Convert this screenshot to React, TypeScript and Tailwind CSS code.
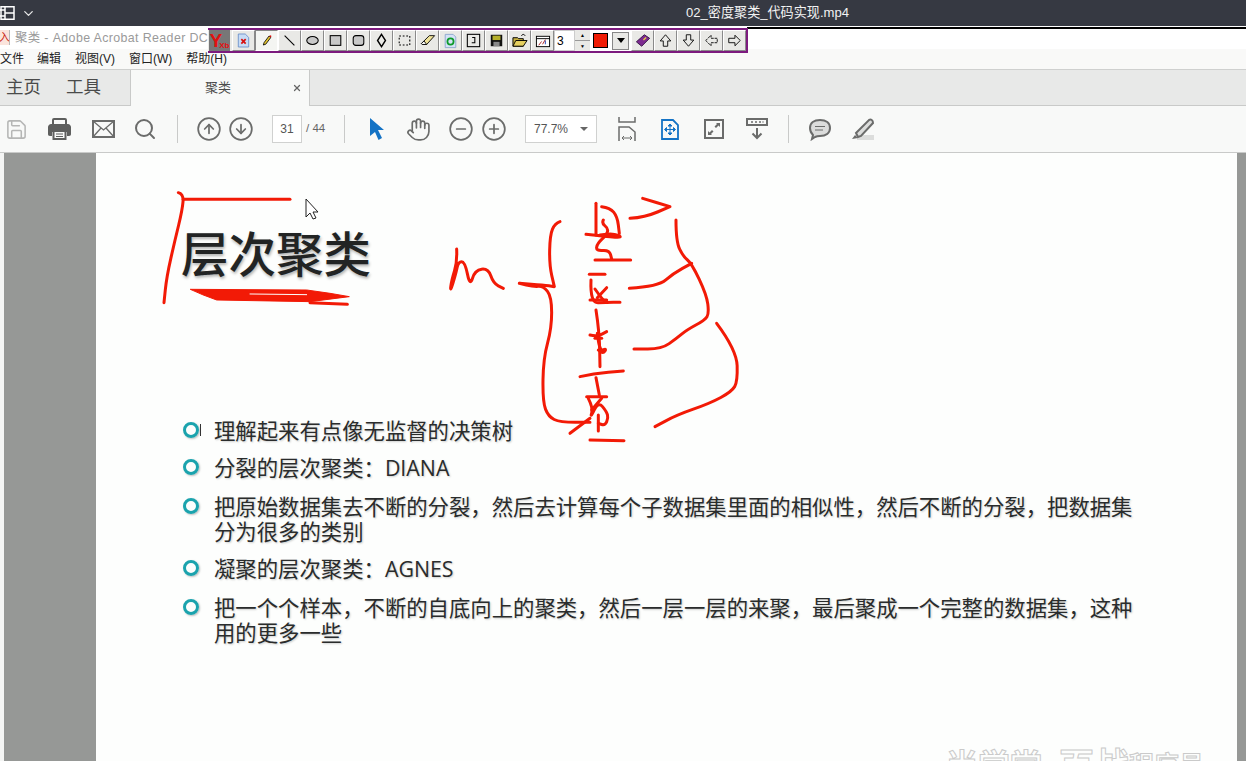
import React from 'react';
import { Save, Search, CircleArrowUp, CircleArrowDown, Hand, CircleMinus, CirclePlus, X, ChevronDown } from 'lucide-react';

const FONT = 'font-["Liberation_Sans","Noto_Sans_CJK_SC",sans-serif]';

const Slot: React.FC<{ className?: string; children: React.ReactNode }> = ({ className, children }) => (
  <div className={`flex items-center justify-center w-[32px] h-[32px] shrink-0 text-[#6b6c6b] ${className ?? ''}`}>{children}</div>
);

const Divider: React.FC<{ className?: string }> = ({ className }) => (
  <div className={`w-px h-[28px] bg-[#c9cac9] shrink-0 ${className ?? ''}`} />
);

const Tool: React.FC<{ active?: boolean; children?: React.ReactNode }> = ({ active, children }) => (
  <div className={`flex items-center justify-center w-[23px] h-[21px] shrink-0 border ${active ? 'bg-[#f4f5f2] border-t-[#888] border-l-[#888] border-r-white border-b-white' : 'bg-[#e9e9e6] border-t-white border-l-white border-r-[#8a8a8a] border-b-[#8a8a8a]'}`}>
    {children}
  </div>
);

const Ico: React.FC<{ children: React.ReactNode }> = ({ children }) => (
  <svg width="15" height="15" viewBox="0 0 17 17" fill="none" stroke="#000" strokeWidth="1.200">{children}</svg>
);

const PurpleToolbar = () => (
  <div className="absolute left-[208px] top-[28px] w-[540px] h-[25px] flex items-center bg-[#e9e9e6] border-y-2 border-r-2 border-[#7c1a7e]">
    <div className="ml-px w-[21px] h-[21px] bg-[#777] flex items-end justify-center shrink-0 overflow-hidden">
      <span className={`text-[#e21010] text-[19px] leading-[21px] font-bold ${FONT}`}>Y</span>
      <span className={`-ml-[3px] text-[#e21010] text-[8px] leading-[11px] font-bold ${FONT}`}>Xb</span>
    </div>
    <div className="w-[2px] shrink-0" />
    <Tool>
      <svg width="13" height="15" viewBox="0 0 15 17"><path d="M1.500 1h8l4 4v11h-12z" fill="#c8dcf6" stroke="#6a8fc8" /><path d="M5 7l5 5M10 7l-5 5" stroke="#d81010" strokeWidth="2" /></svg>
    </Tool>
    <Tool active>
      <svg width="14" height="15" viewBox="0 0 17 17"><path d="M11 3l2 2-6 8-3 1 1-3z" fill="#e8c830" stroke="#000" /><path d="M11 3l2 2 1-2-1-1z" fill="#d81010" /></svg>
    </Tool>
    <Tool><Ico><path d="M3 3l11 11" /></Ico></Tool>
    <Tool><Ico><ellipse cx="8.500" cy="8.500" rx="6.500" ry="4.500" fill="#c8c8c8" /></Ico></Tool>
    <Tool><Ico><rect x="2.500" y="3" width="12" height="11" fill="#c8c8c8" /></Ico></Tool>
    <Tool><Ico><rect x="2.500" y="3" width="12" height="11" rx="3" fill="#c8c8c8" /></Ico></Tool>
    <Tool><Ico><path d="M8.500 1.500l4.500 7-4.500 7-4.500-7z" fill="#e9e9e6" strokeWidth="1.600" /></Ico></Tool>
    <Tool><Ico><rect x="2.500" y="3.500" width="12" height="10" strokeDasharray="2 2" /></Ico></Tool>
    <Tool>
      <svg width="16" height="15" viewBox="0 0 17 17"><path d="M1 12l9-9h6l-9 10H2z" fill="#efe39a" stroke="#000" /><path d="M1 12l3-3 3 4H2z" fill="#fff" stroke="#000" /></svg>
    </Tool>
    <Tool>
      <svg width="15" height="16" viewBox="0 0 17 17"><path d="M2.500 1h9l3 3v12h-12z" fill="#d4e2f6" stroke="#8aa4cc" /><circle cx="8.500" cy="9" r="3.500" fill="none" stroke="#0c9a2a" strokeWidth="2" /></svg>
    </Tool>
    <Tool><Ico><rect x="1.500" y="1.500" width="14" height="14" /><path d="M7 5h3v6H6.500" /></Ico></Tool>
    <Tool>
      <svg width="15" height="15" viewBox="0 0 17 17"><rect x="2" y="2" width="13" height="13" fill="#111" /><rect x="4" y="3" width="9" height="5" fill="#b5b02a" /><rect x="5" y="10" width="7" height="5" fill="#888" /></svg>
    </Tool>
    <Tool>
      <svg width="16" height="16" viewBox="0 0 17 17"><path d="M1 14V5h5l1 1h5v8z" fill="#c6b040" stroke="#000" /><path d="M1 14l3-6h12l-4 6z" fill="#e6d060" stroke="#000" /><path d="M10 3c1-2 3-2 4 0" stroke="#000" fill="none" /></svg>
    </Tool>
    <Tool>
      <svg width="16" height="16" viewBox="0 0 17 17"><rect x="1.500" y="3.500" width="14" height="11" fill="#fff" stroke="#000" /><path d="M1.500 6h14" stroke="#000" /><path d="M4 13l3-4M8 12l3-5" stroke="#b02020" /><path d="M11 12V8" stroke="#2040b0" /></svg>
    </Tool>
    <div className="w-[21px] h-[21px] bg-white border border-[#ccc] shrink-0 flex items-center pl-[2px]">
      <span className={`text-[12px] leading-none text-black ${FONT}`}>3</span>
    </div>
    <div className="w-[15px] h-[21px] flex flex-col shrink-0">
      <div className="flex-1 flex items-center justify-center bg-[#e9e9e6] border-b border-[#999] text-[5px] leading-none">▲</div>
      <div className="flex-1 flex items-center justify-center bg-[#e9e9e6] text-[5px] leading-none">▼</div>
    </div>
    <div className="w-[41px] h-[21px] bg-white shrink-0 flex items-center pl-[3px] gap-[4px]">
      <div className="w-[15px] h-[15px] bg-[#f01c06] border border-black" />
      <div className="w-[17px] h-[18px] bg-[#e9e9e6] border border-[#888] flex items-center justify-center">
        <div className="w-0 h-0 border-x-[4px] border-x-transparent border-t-[5px] border-t-black" />
      </div>
    </div>
    <Tool>
      <svg width="16" height="15" viewBox="0 0 17 17"><path d="M1 10l9-8 6 4-9 9z" fill="#7c2a90" stroke="#301040" /><path d="M9 8l3-3" stroke="#e8d040" strokeWidth="1.500" /></svg>
    </Tool>
    <Tool><Ico><path d="M8.500 2l6 7h-3.500v6H6V9H2.500z" strokeWidth="1" /></Ico></Tool>
    <Tool><Ico><path d="M8.500 15l6-7h-3.500V2H6v6H2.500z" strokeWidth="1" /></Ico></Tool>
    <Tool><Ico><path d="M2 8.500l6-6v3.500h7V11H8v3.500z" strokeWidth="1" strokeDasharray="3 1" /></Ico></Tool>
    <Tool><Ico><path d="M15 8.500l-6-6v3.500H2V11h7v3.500z" strokeWidth="1" /></Ico></Tool>
  </div>
);

// turns hand-picked points into a soft pen stroke
const pen = (pts: number[][]) => {
  let d = `M${pts[0][0]} ${pts[0][1]}`;
  for (let i = 1; i < pts.length - 1; i++) {
    const mx = (pts[i][0] + pts[i + 1][0]) / 2;
    const my = (pts[i][1] + pts[i + 1][1]) / 2;
    d += `Q${pts[i][0]} ${pts[i][1]} ${mx} ${my}`;
  }
  const last = pts[pts.length - 1];
  return `${d}L${last[0]} ${last[1]}`;
};

const titleStrokes: number[][][] = [
  [[85, 38], [101, 42], [97, 90], [75, 180], [50, 290], [42, 368]],
  [[100, 58], [420, 58]],
  [[920, 207], [922, 245], [905, 300], [900, 338], [918, 280], [925, 245], [945, 245], [960, 320], [975, 270], [1015, 265], [1030, 310], [1060, 325]],
  [[480, 368], [592, 373]],
];

const treeStrokes: number[][][] = [
  [[258, 55], [258, 150]],
  [[275, 65], [300, 68], [322, 95], [328, 145]],
  [[280, 105], [275, 115], [295, 130], [290, 150], [262, 175], [258, 198], [298, 195], [305, 222]],
  [[228, 148], [290, 155], [340, 158], [310, 145], [270, 150]],
  [[255, 225], [362, 225]],
  [[238, 268], [285, 268]],
  [[243, 285], [240, 355], [290, 352], [330, 352]],
  [[255, 312], [278, 345], [292, 352]],
  [[290, 308], [262, 338]],
  [[240, 345], [290, 345]],
  [[258, 375], [268, 440], [270, 545]],
  [[240, 450], [262, 455], [290, 440]],
  [[262, 445], [268, 500], [290, 490], [280, 505], [265, 495]],
  [[255, 460], [275, 460]],
  [[210, 575], [250, 565], [340, 558]],
  [[258, 578], [268, 630]],
  [[230, 635], [290, 635]],
  [[235, 640], [250, 670], [240, 700], [265, 650], [290, 680], [295, 700], [285, 722], [265, 715]],
  [[275, 640], [245, 675]],
  [[265, 690], [265, 738]],
  [[180, 745], [240, 700]],
  [[240, 765], [342, 767]],
  [[150, 110], [135, 115], [120, 150], [118, 240], [133, 305], [133, 305], [100, 300], [28, 295], [28, 295], [70, 305], [100, 303], [125, 335], [125, 430], [100, 520], [98, 650], [115, 695], [150, 712], [240, 712]],
  [[360, 100], [405, 97], [480, 65], [480, 65], [398, 40]],
  [[498, 105], [498, 170], [520, 215], [545, 235], [590, 330], [597, 385], [585, 405], [530, 435], [500, 460], [455, 492], [372, 492]],
  [[358, 310], [445, 305], [490, 265], [545, 235]],
  [[620, 415], [680, 495], [683, 590], [665, 620], [600, 655], [500, 690], [435, 725]],
];

const Ink = () => (
  <svg className="absolute inset-0 pointer-events-none" width="1246" height="761" viewBox="0 0 1246 761" fill="none" stroke="#f21a06" strokeLinecap="round" strokeLinejoin="round">
    <g transform="translate(150 180) scale(0.3333)" strokeWidth="9">
      {titleStrokes.map((s, i) => <path key={i} d={pen(s)} />)}
      <path d="M122 328L470 330L540 340L598 350L480 365L200 360L160 345Z" fill="#f21a06" strokeWidth="3" />
      <path d="M300 342L470 344" stroke="#fdfefd" strokeWidth="3" />
    </g>
    <g transform="translate(510 185) scale(0.3333)" strokeWidth="9">
      {treeStrokes.map((s, i) => <path key={i} d={pen(s)} />)}
    </g>
    <path d="M306 199V217L310 213L313 219L316 218L313 212H318Z" fill="#fff" stroke="#222" strokeWidth="1" strokeLinecap="butt" />
  </svg>
);

const Bullet: React.FC<{ className?: string; text: string; caret?: boolean }> = ({ className, text, caret }) => (
  <div className={`relative flex items-start ${className ?? ''}`}>
    <div className="w-[16px] h-[16px] mt-[4px] rounded-full border-[3.500px] border-[#1ba3ad] shrink-0 [box-shadow:1px_1px_2px_rgba(0,0,0,0.25)]" />
    {caret ? <div className="absolute left-[17px] top-[6px] w-px h-[12px] bg-[#333]" /> : null}
    <p className={`ml-[15px] w-[925px] text-[21.37px] leading-[25px] text-[#2a2c2c] [text-shadow:1px_1px_2px_rgba(0,0,0,0.2)] font-["Open_Sans","Noto_Sans_CJK_SC",sans-serif]`}>{text}</p>
  </div>
);

const App: React.FC = () => {
  return (
    <div className={`relative w-full h-screen overflow-hidden flex flex-col bg-white ${FONT}`}>
      {/* player title bar */}
      <div className="h-[26px] shrink-0 bg-[#363942] flex items-center relative">
        <svg width="15" height="14" viewBox="0 0 15 14" fill="none" stroke="#fff" strokeWidth="1.500" className="shrink-0">
          <path d="M1 .8h13v12.400H1zM5 .8v12.400M5 7h9M0 4h5M0 10h5" />
        </svg>
        <ChevronDown size={15} color="#e8e8e8" className="ml-[6px]" />
        <span className="ml-[650px] text-[13.1px] text-[#f2f2f2] whitespace-nowrap">02_密度聚类_代码实现.mp4</span>
      </div>

      {/* acrobat title */}
      <div className="h-[23px] shrink-0 bg-white flex items-center relative">
        <div className="w-[10px] h-[15px] bg-[#fbe4dc] border-r border-[#b8b8b8] flex items-center justify-center shrink-0 overflow-hidden">
          <span className="text-[#c8200c] text-[11px] leading-none">入</span>
        </div>
        <span className="ml-[5px] mt-[1px] text-[12.4px] text-[#9a9a9a] tracking-[0.38px] whitespace-nowrap">聚类 - Adobe Acrobat Reader DC</span>
        <div className="absolute left-[747px] right-0 top-[1px] h-[2px] bg-black" />
      </div>

      {/* menu */}
      <div className="h-[21px] shrink-0 bg-[#f9f9f8] border-b border-[#cfd0cf] flex items-center text-[12px] text-[#222]">
        <span>文件</span>
        <span className="ml-[13px]">编辑</span>
        <span className="ml-[14px]">视图(V)</span>
        <span className="ml-[14px]">窗口(W)</span>
        <span className="ml-[14px]">帮助(H)</span>
      </div>

      {/* tabs */}
      <div className="h-[36px] shrink-0 bg-[#e8e9e8] border-b border-[#c9cac9] flex items-stretch">
        <div className="w-[130px] flex items-center pl-[6px] gap-[25px] text-[17.500px] text-[#4a4b4a]">
          <span>主页</span>
          <span>工具</span>
        </div>
        <div className="w-[180px] bg-[#f8f9f8] border-x border-[#c9cac9] -mb-px flex items-center relative">
          <span className="ml-[74px] text-[13px] text-[#4a4b4a]">聚类</span>
          <X size={10} strokeWidth={3} color="#666" className="absolute left-[161px] top-[13px]" />
        </div>
      </div>

      {/* main toolbar */}
      <div className="h-[47px] shrink-0 bg-[#f8f9f8] border-b border-[#c9cac9] flex items-center">
        <Slot className="ml-0 text-[#b5b6b5]"><Save size={23} strokeWidth={1.600} /></Slot>
        <Slot className="ml-[11px]">
          <svg width="23" height="22" viewBox="0 0 23 22">
            <path d="M5 7V2c0-.6.4-1 1-1h11c.6 0 1 .4 1 1v5z" fill="none" stroke="#5e5f5e" strokeWidth="2" />
            <path d="M3 6h17c1.500 0 3 1.500 3 3v7c0 1-.5 2-2 2h-2v-4H4v4H2c-1.500 0-2-1-2-2V9c0-1.500 1.500-3 3-3z" fill="#5e5f5e" />
            <path d="M5.500 13h12v8h-12z" fill="#f8f9f8" stroke="#5e5f5e" strokeWidth="2" />
            <path d="M8 16h7M8 18.500h7" stroke="#5e5f5e" />
          </svg>
        </Slot>
        <Slot className="ml-[12px]">
          <svg width="23" height="18" viewBox="0 0 23 18" fill="none" stroke="#6b6c6b">
            <rect x="1" y="1" width="21" height="16" strokeWidth="2" />
            <path d="M1 1l10.500 9L22 1M1 17l8-9M22 17l-8-9" strokeWidth="1.300" />
          </svg>
        </Slot>
        <Slot className="ml-[10px]"><Search size={24} strokeWidth={2} /></Slot>
        <Divider className="ml-[16px]" />
        <Slot className="ml-[15px]"><CircleArrowUp size={26} strokeWidth={1.600} /></Slot>
        <Slot className="ml-0"><CircleArrowDown size={26} strokeWidth={1.600} /></Slot>
        <div className="ml-[15px] w-[30px] h-[28px] bg-white border border-[#d0d1d0] flex items-center justify-center text-[12px] text-[#555]">31</div>
        <span className="ml-[4px] text-[11.500px] text-[#666] whitespace-nowrap w-[23px]">/ 44</span>
        <Divider className="ml-[15px]" />
        <Slot className="ml-[15px]">
          <svg width="17" height="24" viewBox="0 0 17 24"><path d="M2 1L16 13H10L14 21L10.500 23L7 15L2 19Z" fill="#1473c5" /></svg>
        </Slot>
        <Slot className="ml-[10px]"><Hand size={25} strokeWidth={1.600} /></Slot>
        <Slot className="ml-[11px]"><CircleMinus size={26} strokeWidth={1.600} /></Slot>
        <Slot className="ml-px"><CirclePlus size={26} strokeWidth={1.600} /></Slot>
        <div className="ml-[15px] w-[72px] h-[28px] bg-white border border-[#d0d1d0] flex items-center justify-between pl-[8px] pr-[8px] text-[12px] text-[#555]">
          <span>77.7%</span>
          <div className="w-0 h-0 border-x-[4px] border-x-transparent border-t-[4px] border-t-[#666]" />
        </div>
        <Slot className="ml-[14px]">
          <svg width="18" height="25" viewBox="0 0 18 25" fill="none" stroke="#6b6c6b" strokeWidth="1.500">
            <path d="M1 0v5h16V0M1 24V10h10l6 5v9" />
            <path d="M4 21h10M4 21l2-2M4 21l2 2M14 21l-2-2M14 21l-2 2" strokeWidth="1" />
          </svg>
        </Slot>
        <Slot className="ml-[11px]">
          <svg width="18" height="21" viewBox="0 0 18 21" fill="none" stroke="#1473c5" strokeWidth="1.800">
            <path d="M1 1h11l5 5v14H1z" />
            <path d="M9 6v9M4.500 10.500h9M9 5l-2 2h4zM9 16l-2-2h4zM3.500 10.500l2-2v4zM14.500 10.500l-2-2v4z" strokeWidth="1" fill="#1473c5" />
          </svg>
        </Slot>
        <Slot className="ml-[12px]">
          <svg width="20" height="20" viewBox="0 0 20 20">
            <rect x="1" y="1" width="18" height="18" fill="none" stroke="#6b6c6b" strokeWidth="2" />
            <path d="M12 4h4v4l-1.500-1.500-2.500 2.500-1.500-1.500 2.500-2.500zM8 16H4v-4l1.500 1.500 2.500-2.500 1.500 1.500-2.500 2.500z" fill="#6b6c6b" />
          </svg>
        </Slot>
        <Slot className="ml-[11px]">
          <svg width="22" height="22" viewBox="0 0 22 22" fill="none" stroke="#6b6c6b" strokeWidth="2">
            <rect x="1" y="1" width="20" height="6" />
            <path d="M5 4h2M9 4h2M13 4h2M16.500 4h1" strokeWidth="1.500" />
            <path d="M11 10v10M6.500 15.500L11 20l4.500-4.500" />
          </svg>
        </Slot>
        <Divider className="ml-[15px]" />
        <Slot className="ml-[15px]">
          <svg width="24" height="23" viewBox="0 0 24 23" fill="#dcdddc" stroke="#6b6c6b" strokeWidth="2">
            <path d="M12 2c6 0 10 3 10 8s-4 8-10 8c-2 0-3 0-5 1l-3 2 1-4c-2-2-3-4-3-7 0-5 4-8 10-8z" />
            <path d="M7 8.500h10M7 12h8" strokeWidth="1" fill="none" />
          </svg>
        </Slot>
        <Slot className="ml-[11px]">
          <svg width="24" height="22" viewBox="0 0 24 22" fill="none">
            <rect x="6" y="17" width="17" height="5" fill="#dcdddc" />
            <path d="M1 21l3-4 3 3z" fill="#6b6c6b" />
            <path d="M5 15L18 2c2-1 4 0 4 3L10 18l-3 1z" fill="#dcdddc" stroke="#6b6c6b" strokeWidth="2" />
          </svg>
        </Slot>
      </div>

      {/* document area */}
      <div className="flex-1 flex min-h-0 bg-[#969896]">
        <div className="w-[4px] shrink-0 bg-[#f4f5f4]" />
        <div className="w-[92px] shrink-0" />
        <div className="w-[1141px] shrink-0 bg-[#fdfefd] relative overflow-hidden pl-[85px] pt-[66px]">
          <h1 className={`text-[47.500px] leading-[66px] text-[#222424] font-medium [text-shadow:1px_2px_3px_rgba(0,0,0,0.3)] font-["Noto_Sans_CJK_SC",sans-serif]`}>层次聚类</h1>
          <div className="pt-[133px] ml-[2px]">
            <Bullet text="理解起来有点像无监督的决策树" caret />
            <Bullet className="mt-[12px]" text="分裂的层次聚类：DIANA" />
            <Bullet className="mt-[14px]" text="把原始数据集去不断的分裂，然后去计算每个子数据集里面的相似性，然后不断的分裂，把数据集分为很多的类别" />
            <Bullet className="mt-[12px]" text="凝聚的层次聚类：AGNES" />
            <Bullet className="mt-[14px]" text="把一个个样本，不断的自底向上的聚类，然后一层一层的来聚，最后聚成一个完整的数据集，这种用的更多一些" />
          </div>
          <div className={`absolute left-[850px] top-[594px] flex items-start whitespace-nowrap leading-[32px] font-bold text-transparent [-webkit-text-stroke:1px_#cacaca] font-["Noto_Sans_CJK_SC",sans-serif]`}>
            <span className="text-[32px]">尚学堂</span>
            <span className="ml-[17px] text-[35px]">百战</span>
            <span className="text-[25px]">程序员</span>
          </div>
        </div>
      </div>

      <PurpleToolbar />
      <Ink />
    </div>
  );
};

export default App;
